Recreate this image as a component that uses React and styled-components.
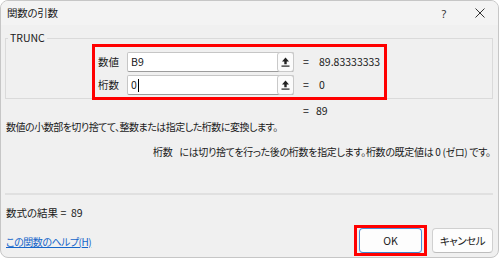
import React from "react";
import styled, { createGlobalStyle, css } from "styled-components";

const GlobalStyle = createGlobalStyle`
  html, body { margin: 0; padding: 0; background: #ffffff; }
  body {
    font-family: "Noto Sans CJK JP", "Noto Sans", sans-serif;
    font-size: 10.5px;
    color: #1a1a1a;
    font-feature-settings: "palt";
  }
`;

const prose = css`
  font-size: 10px;
  letter-spacing: -0.5px;
`;

const Window = styled.div`
  width: 499px;
  height: 258px;
  box-sizing: border-box;
  border: 1px solid #c6c6c6;
  border-radius: 8px;
  background: #f0f0f0;
  overflow: hidden;
  display: flex;
  flex-direction: column;
`;

const TitleBar = styled.div`
  display: flex;
  align-items: center;
  height: 24px;
  padding-left: 6px;
  background: #f3f3f3;
`;

const Title = styled.span`
  font-size: 10.5px;
  line-height: 14px;
  letter-spacing: -0.3px;
`;

const Controls = styled.div`
  margin-left: auto;
  display: flex;
`;

const ControlButton = styled.span`
  width: 36px;
  height: 24px;
  display: flex;
  align-items: center;
  justify-content: center;
  font-family: "Noto Sans", sans-serif;
  font-size: 11px;
  color: #333;
`;

const Body = styled.div`
  padding: 0 5px 0 4px;
  display: flex;
  flex-direction: column;
`;

const GroupBox = styled.fieldset`
  margin: 6px 0 0 0;
  padding: 0;
  border: 1px solid #dadada;
  min-width: 0;
`;

const Legend = styled.legend`
  padding: 0 2px;
  margin-left: 2px;
  line-height: 14px;
`;

const ArgFrame = styled.div`
  margin: -1px 0 -2px 86px;
  width: 295px;
  box-sizing: border-box;
  border: 3px solid #ff0000;
  padding: 5px 0 2px 3px;
  display: flex;
  flex-direction: column;
  gap: 3px;
`;

const ArgRow = styled.div`
  display: flex;
  align-items: center;
  height: 20px;
`;

const ArgLabel = styled.span`
  width: 29px;
  line-height: 14px;
`;

const InputBox = styled.div`
  width: 167px;
  height: 20px;
  box-sizing: border-box;
  display: flex;
  background: #ffffff;
  border: 1px solid #c6c6c6;
  border-bottom-color: #9c9c9c;
  border-radius: 2px;
`;

const TextField = styled.div`
  flex: 1;
  display: flex;
  align-items: center;
  padding-left: 3px;
  line-height: 14px;
`;

const Caret = styled.span`
  display: inline-block;
  width: 1px;
  height: 13px;
  background: #000;
  margin-left: 1px;
`;

const RefButton = styled.div`
  width: 17px;
  margin: -1px -1px -1px 0;
  box-sizing: border-box;
  border: 1px solid #c9c9c9;
  border-radius: 3px;
  background: #fbfbfb;
  display: flex;
  align-items: center;
  justify-content: center;
`;

const Eq = styled.span`
  margin-left: 9px;
  width: 16px;
  line-height: 14px;
`;

const Value = styled.span`
  line-height: 14px;
`;

const ResultLine = styled.div`
  margin-top: 5px;
  padding-left: 298px;
  line-height: 14px;
  white-space: pre;
`;

const Description = styled.div`
  ${prose}
  margin-top: 2px;
  padding-left: 1px;
  line-height: 14px;
`;

const ArgDescription = styled.div`
  ${prose}
  letter-spacing: -0.32px;
  margin-top: 11px;
  padding-left: 148px;
  line-height: 14px;
  white-space: pre;
`;

const ArgName = styled.span`
  margin-right: 7px;
`;

const Separator = styled.div`
  margin-top: 34px;
  height: 2px;
  background: #e0e0e0;
`;

const Footer = styled.div`
  margin-top: 11px;
  display: flex;
  align-items: flex-start;
  justify-content: space-between;
`;

const FooterLeft = styled.div`
  display: flex;
  flex-direction: column;
  gap: 15px;
  padding-left: 1px;
`;

const FormulaResult = styled.div`
  line-height: 14px;
  white-space: pre;
`;

const HelpLink = styled.a`
  ${prose}
  line-height: 14px;
  color: #1565c9;
  text-decoration: underline;
  cursor: pointer;
`;

const Buttons = styled.div`
  margin-top: 19px;
  display: flex;
  align-items: center;
  gap: 5px;
`;

const Highlight = styled.div`
  border: 3px solid #ff0000;
  padding: 0 2px;
  display: flex;
`;

const Button = styled.button`
  width: ${(p) => p.$width}px;
  height: 25px;
  box-sizing: border-box;
  font-family: inherit;
  font-size: 10.5px;
  font-feature-settings: "palt";
  letter-spacing: ${(p) => (p.$primary ? "0" : "-0.5px")};
  color: #1a1a1a;
  background: #fdfdfd;
  border: 1px solid ${(p) => (p.$primary ? "#4a8fd6" : "#d0d0d0")};
  border-bottom-color: ${(p) => (p.$primary ? "#3f84cc" : "#bdbdbd")};
  border-radius: 4px;
  padding: 0;
`;

const UpArrow = () => (
  <svg width="9" height="10" viewBox="0 0 9 10">
    <path d="M4.5 0.5 L1 4.5 H3.3 V7.3 H5.7 V4.5 H8 Z" fill="#222" />
    <rect x="0.5" y="8.5" width="8" height="1.2" fill="#222" />
  </svg>
);

const CloseIcon = () => (
  <svg width="10" height="10" viewBox="0 0 10 10">
    <path d="M0.5 0.5 L9.5 9.5 M9.5 0.5 L0.5 9.5" stroke="#333" strokeWidth="1" />
  </svg>
);

const args = [
  { label: "数値", value: "B9", result: "89.83333333" },
  { label: "桁数", value: "0", result: "0", caret: true },
];

export default function App() {
  return (
    <>
      <GlobalStyle />
      <Window>
        <TitleBar>
          <Title>関数の引数</Title>
          <Controls>
            <ControlButton>?</ControlButton>
            <ControlButton>
              <CloseIcon />
            </ControlButton>
          </Controls>
        </TitleBar>
        <Body>
          <GroupBox>
            <Legend>TRUNC</Legend>
            <ArgFrame>
              {args.map((a) => (
                <ArgRow key={a.label}>
                  <ArgLabel>{a.label}</ArgLabel>
                  <InputBox>
                    <TextField>
                      {a.value}
                      {a.caret && <Caret />}
                    </TextField>
                    <RefButton>
                      <UpArrow />
                    </RefButton>
                  </InputBox>
                  <Eq>=</Eq>
                  <Value>{a.result}</Value>
                </ArgRow>
              ))}
            </ArgFrame>
          </GroupBox>
          <ResultLine>{"=   89"}</ResultLine>
          <Description>数値の小数部を切り捨てて、整数または指定した桁数に変換します。</Description>
          <ArgDescription>
            <ArgName>桁数</ArgName>
            {"には切り捨てを行った後の桁数を指定します。桁数の既定値は 0 (ゼロ) です。"}
          </ArgDescription>
          <Separator />
          <Footer>
            <FooterLeft>
              <FormulaResult>{"数式の結果 =  89"}</FormulaResult>
              <HelpLink>この関数のヘルプ(H)</HelpLink>
            </FooterLeft>
            <Buttons>
              <Highlight>
                <Button $primary $width={63}>OK</Button>
              </Highlight>
              <Button $width={61}>キャンセル</Button>
            </Buttons>
          </Footer>
        </Body>
      </Window>
    </>
  );
}
